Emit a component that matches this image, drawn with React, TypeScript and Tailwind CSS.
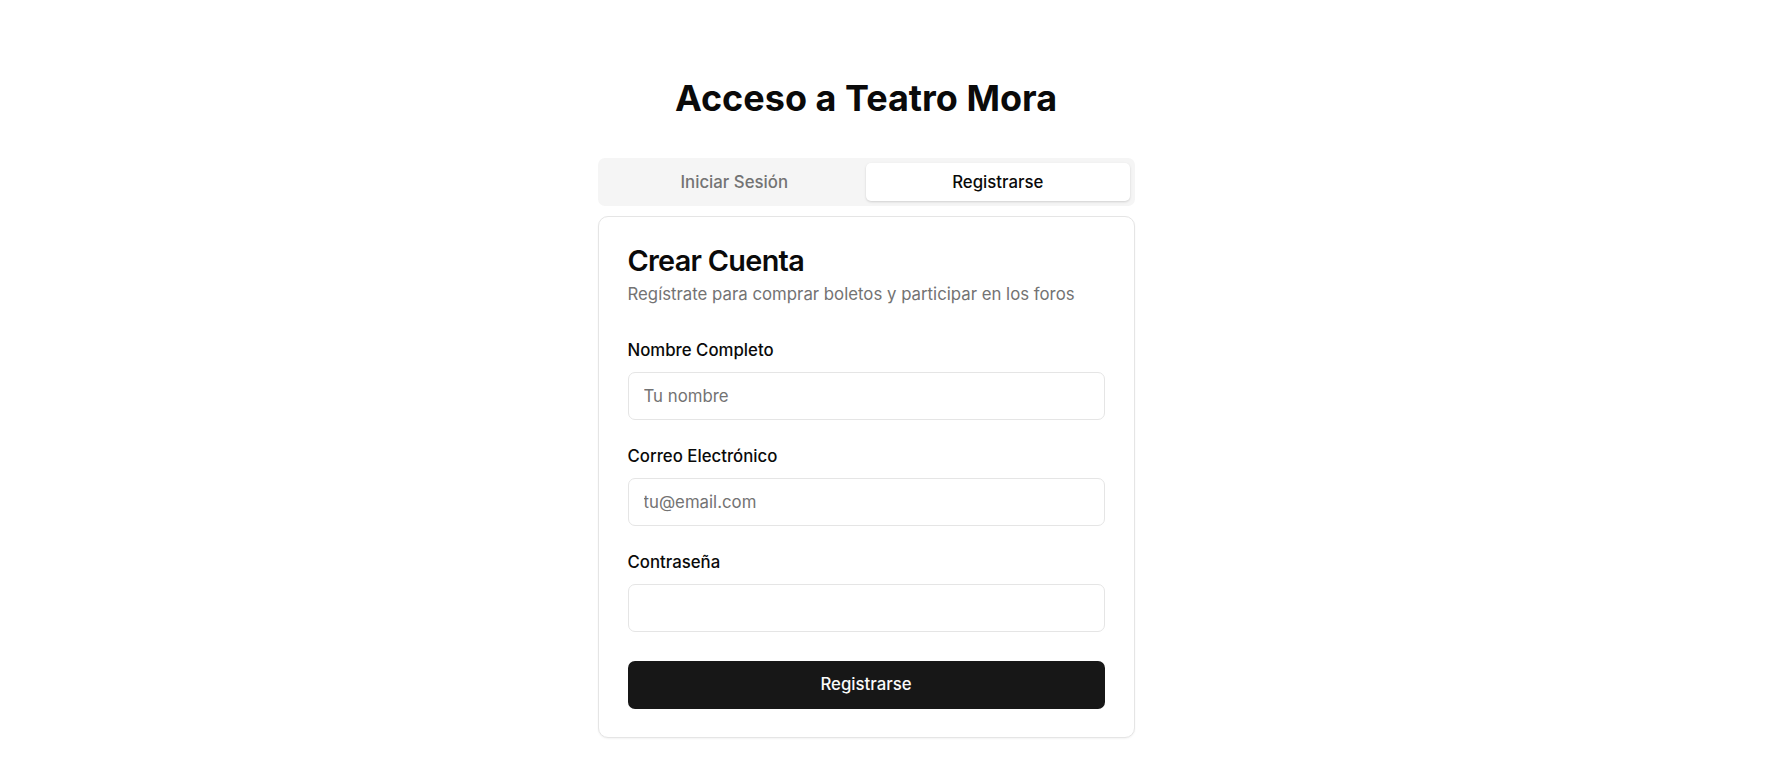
import React from "react";

export default function App() {
  return (
    <div
      className="min-h-screen w-full bg-white text-[#0a0a0a]"
      style={{ fontFamily: "Inter, 'Noto Sans', sans-serif" }}
    >
      <div className="flex justify-center pr-[56px] pt-[77px]">
        <div className="flex w-[537px] flex-col">
          <h1 className="text-center text-[36px] font-bold leading-[43px]">
            Acceso a Teatro Mora
          </h1>

          <div className="mt-[38px] flex h-[48px] items-center rounded-[7px] bg-[#f5f5f5] p-[5px]">
            <button className="flex h-full flex-1 items-center justify-center rounded-[5px] pt-[1px] text-[16.8px] font-medium text-[#737373]">
              Iniciar Sesión
            </button>
            <button className="flex h-full flex-1 items-center justify-center rounded-[5px] bg-white pt-[1px] text-[16.8px] font-medium text-[#0a0a0a] shadow-[0_1px_3px_rgba(0,0,0,0.1),0_1px_2px_rgba(0,0,0,0.06)]">
              Registrarse
            </button>
          </div>

          <div className="mt-[10px] rounded-[10px] border border-[#e5e5e5] bg-white shadow-[0_1px_2px_rgba(0,0,0,0.05)]">
            <div className="flex flex-col gap-[7px] p-[29px] pb-[32px]">
              <h2 className="text-[28.8px] font-semibold leading-[29px] tracking-[-0.7px]">
                Crear Cuenta
              </h2>
              <p className="text-[16.8px] leading-[24px] text-[#737373]">
                Regístrate para comprar boletos y participar en los foros
              </p>
            </div>
            <div className="flex flex-col px-[29px] pb-[28px]">
              <div className="flex flex-col gap-[10px]">
                <label className="text-[16.8px] font-medium leading-[24px]">Nombre Completo</label>
                <input
                  className="h-[48px] w-full rounded-[7px] border border-[#e5e5e5] bg-white px-[15px] text-[16.8px] outline-none placeholder:text-[#737373]"
                  placeholder="Tu nombre"
                />
              </div>
              <div className="mt-[24px] flex flex-col gap-[10px]">
                <label className="text-[16.8px] font-medium leading-[24px]">Correo Electrónico</label>
                <input
                  className="h-[48px] w-full rounded-[7px] border border-[#e5e5e5] bg-white px-[15px] text-[16.8px] outline-none placeholder:text-[#737373]"
                  placeholder="tu@email.com"
                />
              </div>
              <div className="mt-[24px] flex flex-col gap-[10px]">
                <label className="text-[16.8px] font-medium leading-[24px]">Contraseña</label>
                <input
                  type="password"
                  className="h-[48px] w-full rounded-[7px] border border-[#e5e5e5] bg-white px-[15px] text-[16.8px] outline-none"
                />
              </div>
              <button className="mt-[29px] flex h-[48px] w-full items-center justify-center rounded-[7px] bg-[#171717] text-[16.8px] font-medium text-[#fafafa]">
                Registrarse
              </button>
            </div>
          </div>
        </div>
      </div>
    </div>
  );
}
